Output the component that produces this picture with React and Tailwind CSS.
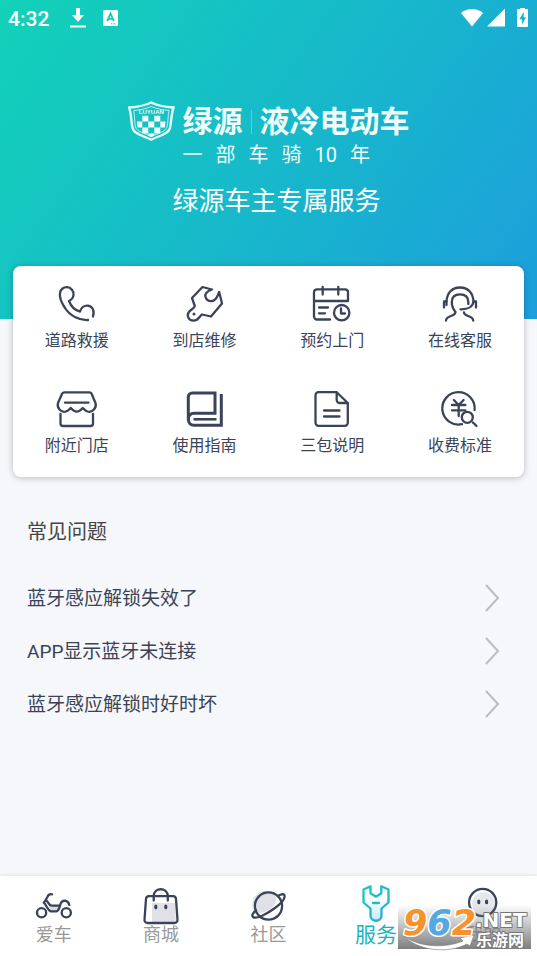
import React, { useState } from 'react';
import clsx from 'clsx';

const Icon = ({ children, className }) => (
  <svg
    viewBox="0 0 40 36"
    className={clsx('w-10 h-9 overflow-visible', className)}
    fill="none"
    stroke="currentColor"
    strokeWidth="2.3"
    strokeLinecap="round"
    strokeLinejoin="round"
    aria-hidden="true"
  >
    {children}
  </svg>
);

const PhoneIcon = () => (
  <Icon>
    <path d="M31 34C23 34.5 13 30 8 22C4 16 2.5 10 3 7C3.5 3 7 1 10 1.2C14 1.4 17 5 16.5 9C16.2 12 14 14 12 15C14 20 18 24.5 23 25.5C24 22 27 19.5 30.5 19.7C35 20 38 24 36 30.5" />
  </Icon>
);

const RepairIcon = () => (
  <Icon>
    <path d="M17.5 1L27 3.5C22 5 19.5 8 20.5 11C22 16 28 16.5 31 12.5C32.5 10.5 33.5 8 34.2 6L37 17.5L26 30.5L17 28.5C14.5 30 14 34.5 8.5 34.7C3 34.5 1.5 29 4 26C6 23 9 23 9.8 20L7 12Z" />
    <circle cx="9" cy="28" r="1.5" fill="currentColor" stroke="none" />
  </Icon>
);

const CalendarIcon = () => (
  <Icon>
    <path d="M18 33.5H5A3 3 0 0 1 2 30.5V6.3A3 3 0 0 1 5 3.3H33A3 3 0 0 1 36 6.3V15H2" />
    <path d="M10.7 1V8.5M26.3 1V8.5M7 21.5H16M7 27.3H13" />
    <circle cx="29.7" cy="26.7" r="7.7" />
    <path d="M29 22.5V27.5H33" />
  </Icon>
);

const ServiceIcon = () => (
  <Icon>
    <path d="M4 21.5V15.5H6.5C7 7 12 1.5 20 1.5C28 1.5 33 7 33.5 15.5H36V21.5" />
    <path d="M6.5 15.5V19M33.5 15.5C33 20.5 28 23.5 20.5 23.3" />
    <path d="M28.3 18V16C28.3 11 25 8.3 20 8.3C15 8.3 11.8 11 11.8 16C11.8 20 13 23 15.5 26C15.3 31 6.5 29 6 34.5" />
    <path d="M24 26.5C24.3 31 32.5 29 33.3 34.5" />
  </Icon>
);

const StoreIcon = () => (
  <Icon>
    <path d="M7.5 1.3H32.5C33.5 1.3 34.2 1.8 34.6 2.7L38.5 12C40 17 35 22 30.5 20.5C28.5 20 27.5 18.5 25.8 17C24 19 22.5 20.7 19.8 20.7C17 20.7 15.5 19 13.8 17C12 18.5 11 20 9 20.5C4.5 22 -.5 17 1 12L5 2.7C5.5 1.8 6.5 1.3 7.5 1.3Z" />
    <path d="M8 11.7H31.5M3.5 23V32.5A2.5 2.5 0 0 0 6 35H33.5A2.5 2.5 0 0 0 36 32.5V23" />
  </Icon>
);

const BookIcon = () => (
  <Icon>
    <g strokeWidth="3" strokeLinecap="butt" strokeLinejoin="miter">
      <path d="M3.3 28.5V6A4 4 0 0 1 7.3 2H30V22.3H9C1.5 22.3 1.5 34.3 9 34.3H36.3V3" />
      <path d="M8.5 28.3H31.5" strokeWidth="2.6" />
    </g>
  </Icon>
);

const DocIcon = () => (
  <Icon>
    <path d="M24.7 1.2H6.5A3 3 0 0 0 3.5 4.2V31.8A3 3 0 0 0 6.5 34.8H32.8A3 3 0 0 0 35.8 31.8V12L24.7 1.2V9A3 3 0 0 0 27.7 12H35.8" />
    <path d="M12 19.5H27.5M12 25.5H27.5" />
  </Icon>
);

const FeeIcon = () => (
  <Icon>
    <path d="M22 33.2A16.2 16.2 0 1 1 34.6 19" />
    <path d="M13.8 9L18.7 14L23.6 9M12 14H25.4M12 19.3H25.4M18.7 14V25" />
    <circle cx="27.3" cy="26.3" r="5.5" fill="#fff" />
    <path d="M33 31.5L36.5 35" />
  </Icon>
);

const BikeIcon = () => (
  <Icon>
    <path d="M14 18.5L17.5 20H26L23 25H17Z" fill="#d8dbe1" stroke="none" />
    <circle cx="7.6" cy="26.7" r="4.6" />
    <circle cx="32.3" cy="26.7" r="4.6" />
    <path d="M18 8.3C15 7.5 14 9 13.2 11.5L9.8 16.8C12.5 18.5 13 24 16.8 25.3H22.5C25 25 25.5 21 26.5 18C28 13.5 34 13.5 35.3 19" />
    <path d="M12 14.2C14.5 15.5 14.5 19.5 17.5 19.7H26" />
  </Icon>
);

const BagIcon = () => (
  <Icon>
    <path d="M11 17H34L35 36H11Z" fill="#dfe1e6" stroke="none" />
    <path d="M8 10.2H32A3 3 0 0 1 35 13L36.5 33.7A3 3 0 0 1 33.5 37H6.5A3 3 0 0 1 3.5 33.7L5 13A3 3 0 0 1 8 10.2Z" />
    <path d="M12.7 14.5V10C13 1 26.5 1 26.8 10V14.5" />
    <path d="M14.8 20V21.7M24.8 20V21.7" strokeWidth="3" />
  </Icon>
);

const PlanetIcon = () => (
  <Icon>
    <path d="M8 28A13.5 13.5 0 0 1 28 9C30 21 20 26 8 28Z" fill="#dfe1e6" stroke="none" />
    <circle cx="20.5" cy="20" r="13.6" />
    <path d="M30 10C32 8.5 35.5 7.5 36.3 9C37.5 11.5 35 16 27 22C19 28 8 33.5 5 31C3.5 29.5 5 26.5 8 24.5" />
  </Icon>
);

const WrenchTabIcon = () => (
  <Icon>
    <defs>
      <linearGradient id="wrench-line" x1="0" y1="0" x2="1" y2="1">
        <stop offset="0" stopColor="#14cdb9" />
        <stop offset="1" stopColor="#2ba5dc" />
      </linearGradient>
      <linearGradient id="wrench-fill" x1="0" y1="0" x2="0" y2="1">
        <stop offset=".3" stopColor="#fff" />
        <stop offset="1" stopColor="#c5ebf5" />
      </linearGradient>
    </defs>
    <path
      d="M14.5 .3L7.5 3.5V16.5L14.5 22.5V29.5C14.5 36.5 25.5 36.5 25.5 29.5V22.5L32.5 16.5V3.5L25.3 .3V7.3L20 10.7L14.5 7.3Z"
      fill="url(#wrench-fill)"
      stroke="url(#wrench-line)"
    />
    <path d="M17 17H23" stroke="#14c0c4" />
  </Icon>
);

const MineIcon = () => (
  <Icon>
    <circle cx="20.5" cy="17.5" r="11.5" fill="#e6e8ec" stroke="none" />
    <circle cx="19.7" cy="16.5" r="13.6" />
    <path d="M15.8 15V16.7M23.6 15V16.7" strokeWidth="3" />
  </Icon>
);

const services = [
  { name: '道路救援', icon: PhoneIcon },
  { name: '到店维修', icon: RepairIcon },
  { name: '预约上门', icon: CalendarIcon },
  { name: '在线客服', icon: ServiceIcon },
  { name: '附近门店', icon: StoreIcon },
  { name: '使用指南', icon: BookIcon },
  { name: '三包说明', icon: DocIcon },
  { name: '收费标准', icon: FeeIcon },
];

const questions = ['蓝牙感应解锁失效了', 'APP显示蓝牙未连接', '蓝牙感应解锁时好时坏'];

const tabs = [
  { name: '爱车', icon: BikeIcon },
  { name: '商城', icon: BagIcon },
  { name: '社区', icon: PlanetIcon },
  { name: '服务', icon: WrenchTabIcon },
  { name: '我的', icon: MineIcon },
];

const StatusBar = () => (
  <div className="flex h-9 items-center px-2">
    <span className="pt-1 font-['Roboto',sans-serif] text-[21px] font-medium">4:32</span>
    <svg viewBox="0 0 18 20" className="ml-5 h-5 w-[18px]" fill="currentColor" aria-hidden="true">
      <path d="M7 0H11V7H15L9 14L3 7H7ZM1 17.5H17V19.5H1Z" />
    </svg>
    <svg viewBox="0 0 15 16" className="ml-4 h-4 w-[15px]" aria-hidden="true">
      <rect width="15" height="16" rx="1.5" fill="currentColor" />
      <path d="M4.2 11.2L7.5 3.5L10.8 11.2M5.4 8.8H9.6" fill="none" stroke="#13c8bf" strokeWidth="1.8" />
      <path d="M8 13.8H13" stroke="#13c8bf" strokeWidth="1" strokeDasharray="1 .6" />
    </svg>
    <svg viewBox="0 0 68 21" className="ml-auto h-[21px] w-[68px]" fill="currentColor" aria-hidden="true">
      <path d="M0 5C6 -.3 16 -.3 22 5L11 18.5Z" />
      <path d="M26 18.5L44 .5V18.5Z" />
      <path
        fillRule="evenodd"
        d="M59 -1H64V1H66A1 1 0 0 1 67 2V18A1 1 0 0 1 66 19H57A1 1 0 0 1 56 18V2A1 1 0 0 1 57 1H59ZM62.8 4L58.3 11.2H61V16.5L65 9.3H62.6Z"
      />
    </svg>
  </div>
);

const Crest = () => (
  <svg viewBox="0 0 47 40" className="h-10 w-[47px]" aria-hidden="true">
    <defs>
      <clipPath id="crest-inner">
        <path d="M8 14.5H38L37 27C36.5 31 29 33 23.3 36C17.5 33 10 31 9.5 27Z" />
      </clipPath>
    </defs>
    <path
      d="M23.3 1.5C30 5 38 6 45.5 6.5C43 14 43.5 20 42 27C40.5 33.5 30 35 23.3 38.7C16.5 35 6 33.5 4.5 27C3 20 3.5 14 1.2 6.5C8.5 6 16.5 5 23.3 1.5Z"
      fill="none"
      stroke="#e4fbfa"
      strokeWidth="2.4"
    />
    <path
      d="M23.3 5.5C29 8 35 9 41 9.5C39.8 15 40.3 21 39 26C37.5 31 29 32.5 23.3 35.6C17.5 32.5 9 31 7.5 26C6.3 21 6.8 15 5.7 9.5C11.5 9 17.5 8 23.3 5.5Z"
      fill="none"
      stroke="#e4fbfa"
      strokeWidth=".8"
    />
    <text
      x="23.3"
      y="13"
      textAnchor="middle"
      fill="#e4fbfa"
      className="font-['Liberation_Sans',sans-serif] text-[6px] font-bold"
    >
      LUYUAN
    </text>
    <g clipPath="url(#crest-inner)" fill="#f2fefe">
      <path d="M14.3 14.5h6v6h-6zM26.3 14.5h6v6h-6zM8.3 20.5h6v6h-6zM20.3 20.5h6v6h-6zM32.3 20.5h6v6h-6zM14.3 26.5h6v6h-6zM26.3 26.5h6v6h-6zM20.3 32.5h6v6h-6z" />
    </g>
  </svg>
);

const Header = () => (
  <header className="bg-[linear-gradient(125deg,#12d2b8_0%,#17b9ca_50%,#1c9edc_100%)] pb-[100px] text-white">
    <StatusBar />
    <div className="mt-[65px] flex justify-center gap-2">
      <Crest />
      <div>
        <h1 className="flex h-[42px] items-center text-[30px] font-bold leading-[42px] text-[#f0fdfd]">
          <span>绿源</span>
          <span className="mx-2 h-6 w-px bg-white/30" />
          <span>液冷电动车</span>
        </h1>
        <p className="flex gap-[13px] text-[20px] leading-6 text-[#f0fdfd]">
          <span>一</span>
          <span>部</span>
          <span>车</span>
          <span>骑</span>
          <span>10</span>
          <span>年</span>
        </p>
      </div>
    </div>
    <p className="mt-4 pl-4 text-center text-[26px] leading-9">绿源车主专属服务</p>
  </header>
);

const Watermark = () => (
  <svg
    viewBox="0 0 133 44"
    className="pointer-events-none absolute bottom-[7px] right-[6px] h-11 w-[133px] overflow-visible"
  >
    <defs>
      <linearGradient id="mark-bg" x1="0" y1="0" x2="0" y2="1">
        <stop offset="0" stopColor="#777" stopOpacity="0" />
        <stop offset="1" stopColor="#777" stopOpacity=".95" />
      </linearGradient>
    </defs>
    <rect width="133" height="44" fill="url(#mark-bg)" />
    <path
      d="M6 31C22 43 48 43 65 36L62 33L76 30L72 41L69 39C50 49 20 46 6 31Z"
      fill="#fff"
      stroke="#777"
      strokeWidth=".6"
    />
    <g stroke="#fff" strokeWidth="3" strokeLinejoin="round" paintOrder="stroke">
      <text
        x="5"
        y="30"
        fill="#f7922d"
        className="font-['DejaVu_Sans',sans-serif] text-[35px] font-bold italic"
      >
        9<tspan fill="#55a9e3">6</tspan>2
      </text>
    </g>
    <g fill="#fff" stroke="#777" strokeWidth="2" strokeLinejoin="round" paintOrder="stroke">
      <text x="77" y="22" className="font-['DejaVu_Sans',sans-serif] text-[20px] font-bold">
        .NET
      </text>
      <text x="78" y="41" className="font-['Noto_Sans_CJK_SC',sans-serif] text-[16px] font-bold">
        乐游网
      </text>
    </g>
  </svg>
);

const App = () => {
  const [activeTab, setActiveTab] = useState('服务');

  return (
    <div className="flex min-h-screen flex-col bg-[#f5f7fa] font-['Roboto','Noto_Sans_CJK_SC',sans-serif] text-[#3a4358]">
      <Header />

      <main className="-mt-[53px] px-[13px]">
        {/* Servicios */}
        <section className="grid grid-cols-4 gap-y-[38px] rounded-lg bg-white pb-[19px] pt-5 shadow-[0_1px_6px_rgba(0,0,0,0.25)]">
          {services.map(({ name, icon: ServiceImage }) => (
            <button key={name} type="button" className="flex flex-col items-center gap-[7px]">
              <ServiceImage />
              <span className="text-[16px] leading-6">{name}</span>
            </button>
          ))}
        </section>

        {/* Preguntas frecuentes */}
        <section className="mt-[41px] px-[14px]">
          <h2 className="text-[20px] leading-7 text-[#444]">常见问题</h2>
          <ul className="mt-[25px]">
            {questions.map((question) => (
              <li key={question}>
                <a href="#" className="flex h-[53px] items-center justify-between pr-[10px] text-[19px]">
                  <span className="pt-[3px]">{question}</span>
                  <svg
                    viewBox="0 0 16 28"
                    className="h-7 w-4"
                    fill="none"
                    stroke="#bcbdbf"
                    strokeWidth="2"
                    aria-hidden="true"
                  >
                    <path d="M2 1L14 14L2 27" />
                  </svg>
                </a>
              </li>
            ))}
          </ul>
        </section>
      </main>

      <nav className="relative mt-auto grid grid-cols-5 bg-white pb-[9px] pt-[10px] shadow-[0_-1px_3px_rgba(0,0,0,0.08)]">
        {tabs.map(({ name, icon: TabImage }) => (
          <button
            key={name}
            type="button"
            onClick={() => setActiveTab(name)}
            className="flex flex-col items-center gap-px"
          >
            <TabImage />
            <span
              className={clsx(
                'leading-6',
                name === activeTab ? 'text-[21px] text-[#18b4b8]' : 'text-[18px] text-[#999]'
              )}
            >
              {name}
            </span>
          </button>
        ))}
        <Watermark />
      </nav>
    </div>
  );
};

export default App;
